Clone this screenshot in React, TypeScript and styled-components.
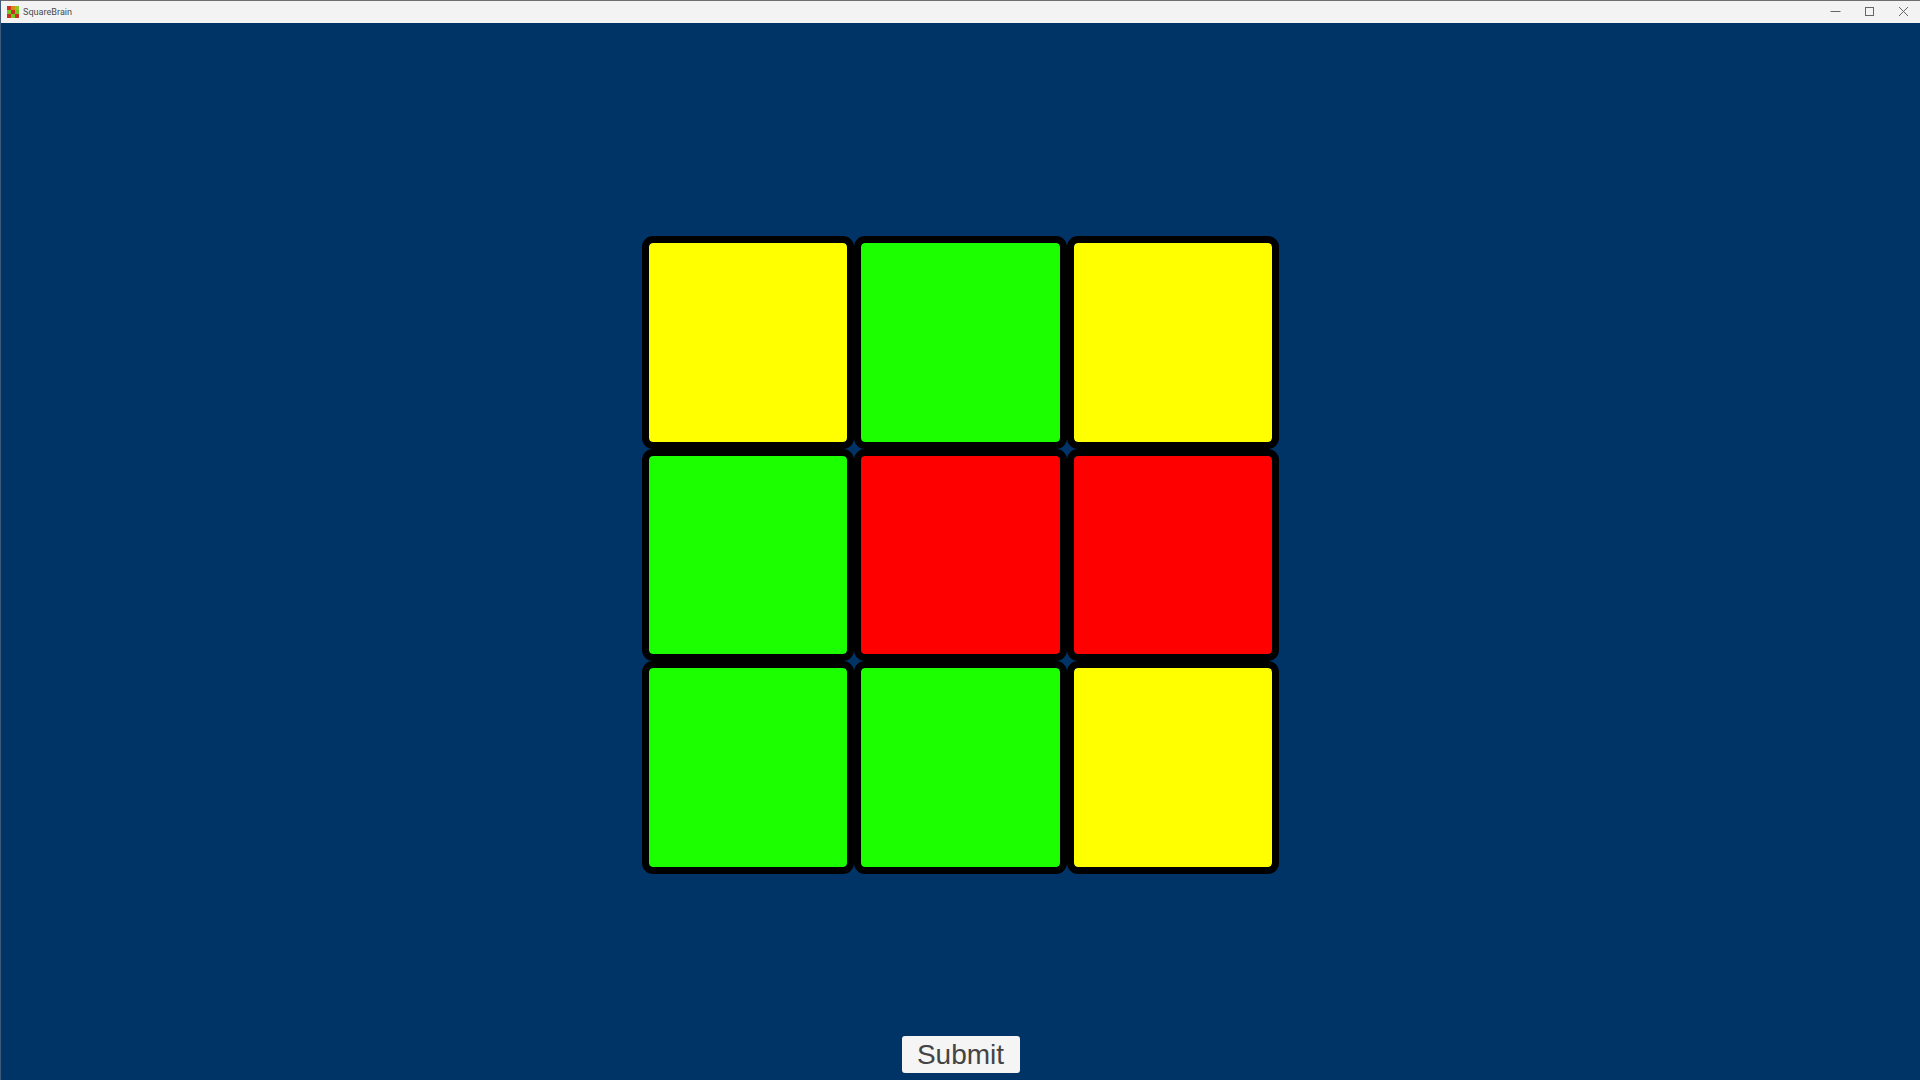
import styled, { createGlobalStyle } from "styled-components";

const GlobalStyle = createGlobalStyle`
  html, body {
    margin: 0;
    padding: 0;
    height: 100%;
    overflow: hidden;
    background: #003366;
  }
`;

const Window = styled.div`
  display: flex;
  flex-direction: column;
  width: 1920px;
  height: 1080px;
  background: #003366;
  border-left: 1px solid #3d5a78;
  box-sizing: border-box;
`;

const TitleBar = styled.div`
  display: flex;
  align-items: center;
  flex: 0 0 23px;
  box-sizing: border-box;
  padding-left: 6px;
  background: #f3f3f3;
  border-top: 1px solid #6e6e6e;
`;

const AppIcon = styled.div`
  display: grid;
  grid-template-columns: repeat(3, 4px);
  grid-auto-rows: 4px;
  flex: none;
  width: 12px;
  height: 12px;
`;

const AppIconCell = styled.div<{ $color: string }>`
  background: ${(props) => props.$color};
`;

const AppName = styled.span`
  margin-left: 4px;
  font-family: Roboto, "Liberation Sans", sans-serif;
  font-size: 9.1px;
  color: #4a4a4a;
`;

const Controls = styled.div`
  display: flex;
  align-items: center;
  margin-left: auto;
  padding: 0 10px 2px 0;
  gap: 21px;
`;

const Control = styled.svg`
  display: block;
  width: 13px;
  height: 13px;
  fill: none;
  stroke: #666;
  stroke-width: 1;
`;

const Board = styled.main`
  display: flex;
  flex: 1;
  flex-direction: column;
  align-items: center;
  padding: 213px 0 7px;
  min-height: 0;
  box-sizing: border-box;
`;

const Grid = styled.div`
  display: grid;
  grid-template-columns: repeat(3, 212.67px);
  grid-auto-rows: 212.67px;
`;

const Square = styled.button<{ $color: string }>`
  display: block;
  width: 100%;
  height: 100%;
  padding: 0;
  border: 7.5px solid #000;
  border-radius: 11px;
  box-sizing: border-box;
  background: ${(props) => props.$color};
  background-clip: padding-box;
`;

const Submit = styled.button`
  margin-top: auto;
  width: 118px;
  height: 37px;
  padding: 0;
  border: none;
  border-radius: 3px;
  background: #f5f5f5;
  color: #444;
  font-family: "Liberation Sans", Arial, sans-serif;
  font-size: 28px;
`;

const Y = "#ffff00";
const G = "#1cff00";
const R = "#ff0000";

const squares = [Y, G, Y, G, R, R, G, G, Y];
const iconCells = ["#c8321e", "#d88a14", "#8fc81c", "#6fc81c", "#c8321e", "#6fc81c", "#c8321e", "#6fc81c", "#c8321e"];

function App() {
  return (
    <>
      <GlobalStyle />
      <Window>
        <TitleBar>
          <AppIcon>
            {iconCells.map((color, index) => (
              <AppIconCell key={index} $color={color} />
            ))}
          </AppIcon>
          <AppName>SquareBrain</AppName>
          <Controls>
            <Control viewBox="0 0 13 13">
              <path d="M1.5 6.5h10" />
            </Control>
            <Control viewBox="0 0 13 13">
              <rect x="2.5" y="2.5" width="8" height="8" />
            </Control>
            <Control viewBox="0 0 13 13">
              <path d="M2 2l9 9M11 2l-9 9" />
            </Control>
          </Controls>
        </TitleBar>
        <Board>
          <Grid>
            {squares.map((color, index) => (
              <Square key={index} $color={color} />
            ))}
          </Grid>
          <Submit>Submit</Submit>
        </Board>
      </Window>
    </>
  );
}

export default App;
